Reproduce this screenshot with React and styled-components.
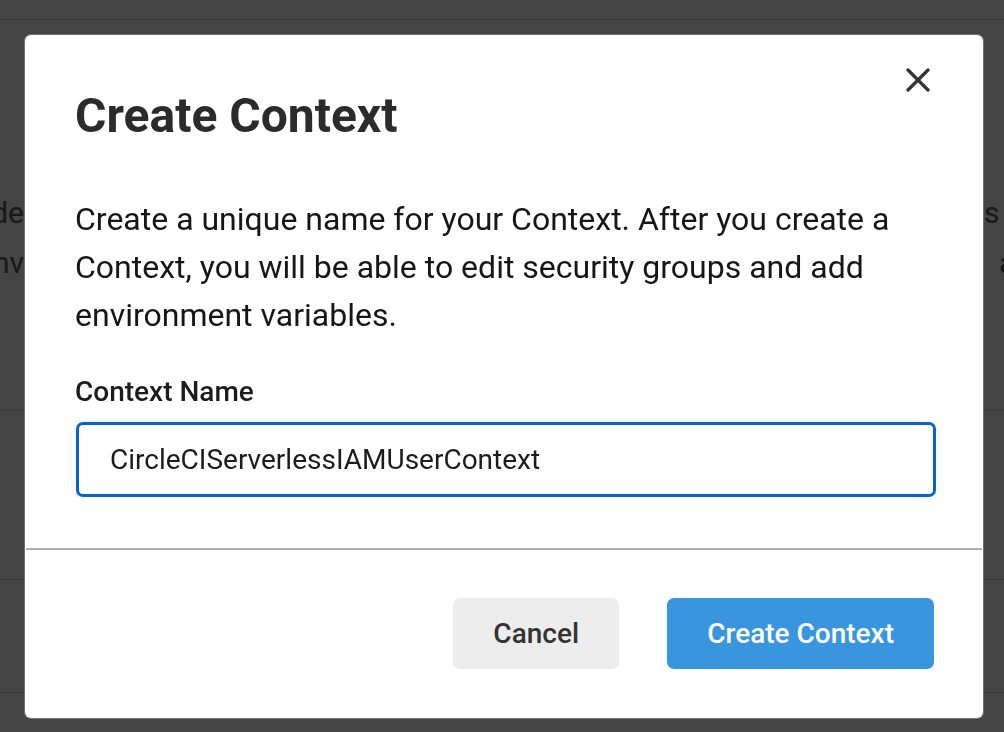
import React from "react";
import styled, { createGlobalStyle } from "styled-components";

const Global = createGlobalStyle`
  html, body { margin: 0; padding: 0; background: #ffffff; }
  body { font-family: Roboto, "Noto Sans", "Liberation Sans", sans-serif; overflow: hidden; }
  * { box-sizing: border-box; }
`;

const Page = styled.div`
  width: 1004px;
  height: 732px;
  background: #ffffff;
  display: flex;
  flex-direction: column;
`;

const TopBar = styled.div`
  height: 20px;
  border-bottom: 1px solid #d6d6d6;
`;

const Intro = styled.section`
  height: 392px;
  display: grid;
  grid-template-columns: 24px 960px 20px;
  padding-top: 168px;
  font-size: 30px;
  line-height: 50px;
  color: #5a5a5a;
`;

const EdgeText = styled.div`
  overflow: hidden;
  display: flex;
  flex-direction: column;
  align-items: ${(p) => (p.$side === "left" ? "flex-end" : "flex-start")};
  white-space: pre;
`;

const Row = styled.div`
  height: ${(p) => p.$h}px;
  border-top: 1px solid #d6d6d6;
`;

const Overlay = styled.div`
  position: fixed;
  inset: 0;
  background: rgba(0, 0, 0, 0.733);
  display: flex;
  align-items: flex-start;
  justify-content: flex-start;
  padding: 35px 0 0 25px;
`;

const Modal = styled.div`
  position: relative;
  width: 958px;
  background: #ffffff;
  border-radius: 6px;
  box-shadow: 0 0 0 1px rgba(255, 255, 255, 0.25);
  display: flex;
  flex-direction: column;
`;

const CloseButton = styled.button`
  position: absolute;
  top: 33px;
  right: 53px;
  width: 24px;
  height: 24px;
  padding: 0;
  border: none;
  background: transparent;
  cursor: pointer;
  display: flex;
`;

const Body = styled.div`
  padding: 54px 49px 51px 50px;
  display: flex;
  flex-direction: column;
`;

const Title = styled.h1`
  margin: 0;
  font-size: 48px;
  line-height: 54px;
  font-weight: 700;
  color: #2b2b2b;
`;

const Description = styled.p`
  margin: 52px 0 0;
  font-size: 32px;
  line-height: 48px;
  font-weight: 400;
  color: #161616;
`;

const Label = styled.label`
  margin-top: 37px;
  font-size: 28px;
  line-height: 32px;
  font-weight: 500;
  color: #1c1c1c;
`;

const Input = styled.input`
  margin-top: 14px;
  margin-left: 1px;
  width: 860px;
  height: 75px;
  border: 3px solid #0a62cc;
  border-radius: 7px;
  padding: 0 31px;
  font-family: inherit;
  font-size: 28px;
  color: #1c1c1c;
  background: #ffffff;
  outline: none;
  box-shadow: 0 0 8px rgba(10, 98, 204, 0.08);
`;

const Divider = styled.hr`
  margin: 0 1px;
  border: none;
  height: 2px;
  background: #ababab;
`;

const Footer = styled.div`
  padding: 48px 49px 49px;
  display: flex;
  justify-content: flex-end;
  gap: 48px;
`;

const Button = styled.button`
  height: 71px;
  padding: 0 40px;
  min-width: ${(p) => p.$w}px;
  border: none;
  border-radius: 7px;
  font-family: inherit;
  font-size: 28px;
  font-weight: 500;
  cursor: pointer;
  background: ${(p) => (p.$primary ? "#3996de" : "#ededed")};
  color: ${(p) => (p.$primary ? "#ffffff" : "#333333")};
`;

const XIcon = () => (
  <svg width="24" height="24" viewBox="0 0 24 24" fill="none">
    <path
      d="M2 2 L22 22 M22 2 L2 22"
      stroke="#333333"
      strokeWidth="3.2"
      strokeLinecap="round"
    />
  </svg>
);

export default function App() {
  return (
    <>
      <Global />
      <Page>
        <TopBar />
        <Intro>
          <EdgeText $side="left">
            <span>Contexts provide a mechanism for securing and sharing environment variables across projects. The environment variables are de</span>
            <span>fined as name/value pairs and are injected at runtime. Contexts let you share env</span>
          </EdgeText>
          <div />
          <EdgeText $side="right">
            <span>s</span>
            <span>{"  a"}</span>
          </EdgeText>
        </Intro>
        <Row $h={170} />
        <Row $h={114} />
        <Row $h={40} />
      </Page>
      <Overlay>
        <Modal role="dialog" aria-labelledby="ctx-title">
          <CloseButton aria-label="Close">
            <XIcon />
          </CloseButton>
          <Body>
            <Title id="ctx-title">Create Context</Title>
            <Description>
              Create a unique name for your Context. After you create a Context, you will be able to edit security groups and add environment variables.
            </Description>
            <Label htmlFor="ctx-name">Context Name</Label>
            <Input id="ctx-name" defaultValue="CircleCIServerlessIAMUserContext" />
          </Body>
          <Divider />
          <Footer>
            <Button $w={166}>Cancel</Button>
            <Button $primary $w={266}>Create Context</Button>
          </Footer>
        </Modal>
      </Overlay>
    </>
  );
}
